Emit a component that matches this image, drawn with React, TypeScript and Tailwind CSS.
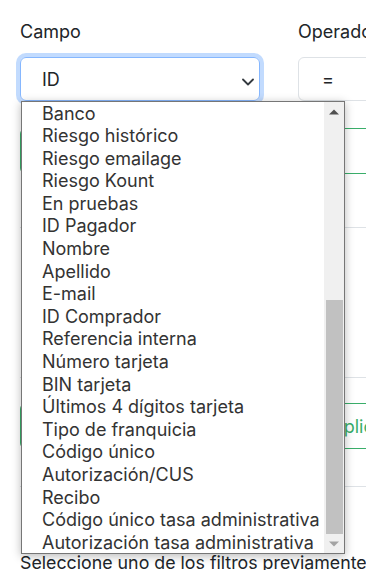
const options = [
  'Banco',
  'Riesgo histórico',
  'Riesgo emailage',
  'Riesgo Kount',
  'En pruebas',
  'ID Pagador',
  'Nombre',
  'Apellido',
  'E-mail',
  'ID Comprador',
  'Referencia interna',
  'Número tarjeta',
  'BIN tarjeta',
  'Últimos 4 dígitos tarjeta',
  'Tipo de franquicia',
  'Código único',
  'Autorización/CUS',
  'Recibo',
  'Código único tasa administrativa',
  'Autorización tasa administrativa',
]

export default function App() {
  return (
    <div className="relative w-[366px] h-[570px] overflow-hidden bg-white font-['Inter',sans-serif] text-[18px] text-[#212529]">
      <div className="w-[760px] pl-5 pt-[18px]">
        {/* Campo / Operador */}
        <div className="flex gap-[38px]">
          <div className="w-[240px]">
            <label className="block leading-[27px] mb-3">Campo</label>
            <div className="relative flex items-center h-[44px] pl-[21px] rounded-[6px] border border-[#86b7fe] shadow-[0_0_0_4px_rgba(13,110,253,0.25)]">
              ID
              <svg className="absolute right-[5px] top-[20px]" width="12" height="8" viewBox="0 0 12 8" fill="none">
                <path d="M1 1.5l5 5 5-5" stroke="#343a40" strokeWidth="1.8" strokeLinecap="round" strokeLinejoin="round" />
              </svg>
            </div>
          </div>
          <div className="w-[240px]">
            <label className="block leading-[27px] mb-3">Operador</label>
            <div className="flex items-center h-[44px] pl-[23px] rounded-[6px] border border-[#dee2e6]">=</div>
          </div>
        </div>

        {/* Agregar (label hidden behind the popup) */}
        <button aria-label="Agregar filtro" className="block mt-[27px] h-[46px] w-[682px] rounded-[6px] border border-[#3aae6a]" />

        <div className="mt-[53px] border-t border-[#dee2e6] h-[150px]" />
        <div className="border-t border-[#dee2e6]" />

        {/* Aplicar */}
        <button className="mt-[25px] h-[46px] w-[682px] flex items-center justify-center rounded-[6px] border border-[#3aae6a] text-[#3aae6a]">
          Aplicar
        </button>

        <div className="mt-[37px] border-t border-[#dee2e6]" />

        <p className="mt-[63px] text-[17.8px] leading-[26px] whitespace-nowrap">
          Seleccione uno de los filtros previamente guardados
        </p>
      </div>

      {/* Native select popup */}
      <div className="absolute left-[21px] top-[101px] w-[324px] h-[453px] flex border border-[#767676] bg-white shadow-[0_2px_9px_rgba(0,0,0,0.28)]">
        <ul className="flex-1 pt-[0.5px] text-[#333]">
          {options.map((o) => (
            <li key={o} className="h-[22.6px] leading-[22.6px] pl-5 whitespace-nowrap">
              {o}
            </li>
          ))}
        </ul>
        <div className="w-[20px] bg-[#f0f0f0] flex flex-col">
          <div className="h-[20px] flex items-center justify-center">
            <svg width="10" height="6" viewBox="0 0 10 6">
              <path d="M0 5.5L5 0.5 10 5.5Z" fill="#505050" />
            </svg>
          </div>
          <div className="flex-1 flex flex-col justify-end pl-[2px] pr-[1px]">
            <div className="h-[234px] bg-[#c1c1c1]" />
          </div>
          <div className="h-[19px] flex items-center justify-center">
            <svg width="10" height="6" viewBox="0 0 10 6">
              <path d="M0 0.5L5 5.5 10 0.5Z" fill="#a3a3a3" />
            </svg>
          </div>
        </div>
      </div>
    </div>
  )
}
